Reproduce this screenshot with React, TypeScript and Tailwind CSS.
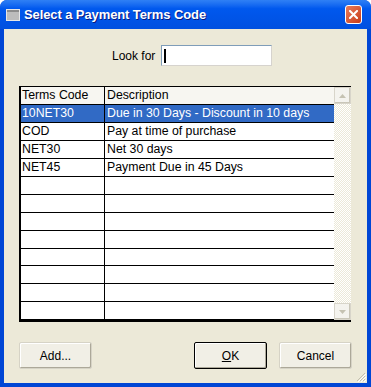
import React from "react";

const rows = [
  { code: "10NET30", desc: "Due in 30 Days - Discount in 10 days" },
  { code: "COD", desc: "Pay at time of purchase" },
  { code: "NET30", desc: "Net 30 days" },
  { code: "NET45", desc: "Payment Due in 45 Days" },
];

function XpButton({ children, isDefault }: { children: React.ReactNode; isDefault?: boolean }) {
  return (
    <button
      className={
        "w-[73px] h-[27px] text-[12px] text-black rounded-[2px] bg-[#f1efe6] flex items-center justify-center " +
        (isDefault
          ? "border border-black shadow-[inset_-1px_-1px_0_#aca899,inset_1px_1px_0_#fff]"
          : "border border-[#d6d3c6] shadow-[inset_-1px_-1px_0_#aca899,inset_1px_1px_0_#fff]")
      }
    >
      {children}
    </button>
  );
}

function ScrollArrow({ up }: { up?: boolean }) {
  return (
    <div className="w-[17px] h-[17px] bg-[#f4f3ee] border border-[#d8d5ca] shadow-[inset_-1px_-1px_0_#c9c6b8] flex items-center justify-center">
      <svg width="7" height="4" viewBox="0 0 7 4">
        {up ? <path d="M3.5 0 L7 4 L0 4 Z" fill="#c5c2b2" /> : <path d="M0 0 L7 0 L3.5 4 Z" fill="#c5c2b2" />}
      </svg>
    </div>
  );
}

export default function App() {
  const blank = Array.from({ length: 12 - rows.length });

  return (
    <div
      className="w-[371px] h-[387px] flex flex-col bg-[#0046d5] rounded-t-[7px] overflow-hidden"
      style={{ fontFamily: '"Liberation Sans", Arial, sans-serif' }}
    >
      {/* title bar */}
      <div className="h-[29px] shrink-0 flex items-center px-[6px] bg-gradient-to-b from-[#2f80f5] via-[#0058ee] via-30% to-[#0050e0]">
        <div className="w-[14px] h-[12px] bg-[#bcbcbc] border border-[#e6e6e6] shadow-[inset_0_2px_0_#8c8c8c]" />
        <span className="ml-[4px] text-white font-bold text-[13px] tracking-[-0.1px] [text-shadow:1px_1px_0_#0a1a80]">
          Select a Payment Terms Code
        </span>
        <div className="ml-auto mr-[3px] w-[17px] h-[19px] rounded-[3px] border border-white bg-gradient-to-br from-[#e97b5a] to-[#c83a14] flex items-center justify-center">
          <svg width="9" height="9" viewBox="0 0 9 9">
            <path d="M1 1 L8 8 M8 1 L1 8" stroke="#fff" strokeWidth="2" strokeLinecap="square" />
          </svg>
        </div>
      </div>

      {/* client */}
      <div className="flex-1 mx-[4px] mb-[4px] bg-[#ece9d8] flex flex-col px-[15px] pt-[16px] relative">
        <div className="flex items-center h-[21px] pl-[93px]">
          <span className="text-[12px] text-black">Look for</span>
          <div className="ml-[6px] w-[111px] h-[21px] bg-white border border-t-[#7f9db9] border-l-[#7f9db9] border-r-[#d6d3ce] border-b-[#d6d3ce] flex items-center pl-[2px]">
            <div className="w-[2px] h-[14px] bg-black" />
          </div>
        </div>

        {/* grid */}
        <div className="mt-[20px] h-[236px] w-[332px] flex border-l-2 border-b-2 border-t border-black bg-white">
          <div className="flex-1 flex flex-col text-[12.3px] text-black">
            <div className="h-[18px] flex border-b border-black bg-[#f7f6f1]">
              <div className="w-[84px] border-r border-black pl-[1px] leading-[17px]">Terms Code</div>
              <div className="flex-1 pl-[2px] leading-[17px]">Description</div>
            </div>
            {rows.map((r, i) => (
              <div
                key={r.code}
                className={"h-[18px] flex border-b border-black " + (i === 0 ? "bg-[#316ac5] text-white" : "")}
              >
                <div className="w-[84px] border-r border-black pl-[1px] leading-[17px]">{r.code}</div>
                <div className="flex-1 pl-[2px] leading-[17px]">{r.desc}</div>
              </div>
            ))}
            {blank.map((_, i) => (
              <div key={i} className="h-[18px] flex border-b border-black">
                <div className="w-[84px] border-r border-black" />
                <div className="flex-1" />
              </div>
            ))}
          </div>
          <div className="w-[17px] flex flex-col bg-[image:repeating-conic-gradient(#ffffff_0_25%,#ece9d8_0_50%)] bg-[length:2px_2px]">
            <ScrollArrow up />
            <div className="flex-1" />
            <ScrollArrow />
          </div>
        </div>

        {/* buttons */}
        <div className="mt-[20px] flex items-center">
          <XpButton>Add...</XpButton>
          <div className="ml-auto flex gap-[12px]">
            <XpButton isDefault>
              <span>
                <span className="underline">O</span>K
              </span>
            </XpButton>
            <XpButton>Cancel</XpButton>
          </div>
        </div>

        {/* resize grip */}
        <svg className="absolute right-[1px] bottom-[1px]" width="11" height="11" viewBox="0 0 11 11">
          <path d="M10 2 L2 10 M10 5 L5 10 M10 8 L8 10" stroke="#c3bfae" strokeWidth="1" />
          <path d="M11 3 L3 11 M11 6 L6 11 M11 9 L9 11" stroke="#fff" strokeWidth="1" />
        </svg>
      </div>
    </div>
  );
}
